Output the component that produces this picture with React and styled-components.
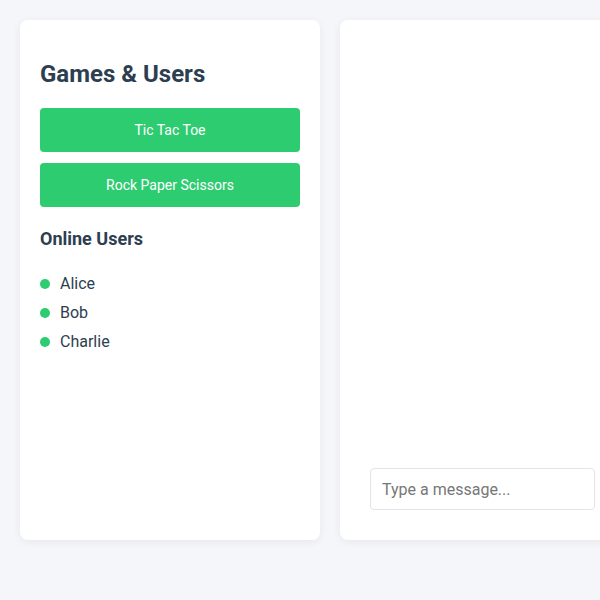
import React from 'react';
import styled, { createGlobalStyle } from 'styled-components';

const GlobalStyle = createGlobalStyle`
  * { box-sizing: border-box; }
  body {
    margin: 0;
    background: #f5f6fa;
    font-family: Roboto, "Liberation Sans", sans-serif;
    overflow: hidden;
  }
`;

const Page = styled.div`
  display: flex;
  gap: 20px;
  padding: 20px;
  height: 560px;
  width: 900px;
`;

const Card = styled.div`
  background: #fff;
  border-radius: 8px;
  box-shadow: 0 2px 10px rgba(0, 0, 0, 0.06);
  padding: 20px;
  display: flex;
  flex-direction: column;
`;

const Sidebar = styled(Card)`
  width: 300px;
`;

const ChatPanel = styled(Card)`
  flex: 1;
  padding: 30px;
`;

const Title = styled.h2`
  margin: 21px 0 21px;
  font-size: 24px;
  font-weight: 700;
  color: #2c3e50;
  line-height: 26px;
`;

const GameButton = styled.button`
  height: 44px;
  width: 100%;
  margin-bottom: 11px;
  border: none;
  border-radius: 4px;
  background: #2ecc71;
  color: #fff;
  font-family: Roboto, "Liberation Sans", sans-serif;
  font-size: 14px;
  padding-top: 1px;
  cursor: pointer;
`;

const SubTitle = styled.h3`
  margin: 9px 0 23px;
  font-size: 18px;
  font-weight: 700;
  color: #2c3e50;
  line-height: 24px;
`;

const UserList = styled.ul`
  list-style: none;
  margin: 0;
  padding: 0;
  display: flex;
  flex-direction: column;
  gap: 9px;
`;

const UserRow = styled.li`
  display: flex;
  align-items: center;
  gap: 10px;
  font-size: 16px;
  line-height: 20px;
  color: #2c3e50;
`;

const Dot = styled.span`
  width: 10px;
  height: 10px;
  border-radius: 50%;
  background: ${p => p.color || '#2ecc71'};
`;

const Messages = styled.div`
  flex: 1;
`;

const InputRow = styled.div`
  display: flex;
  gap: 10px;
`;

const MessageInput = styled.input`
  width: 225px;
  height: 42px;
  padding: 0 11px;
  border: 1px solid #e3e4e8;
  border-radius: 4px;
  font-family: Roboto, "Liberation Sans", sans-serif;
  font-size: 16px;
  color: #2c3e50;
  outline: none;
  &::placeholder { color: #777; }
`;

const users = ['Alice', 'Bob', 'Charlie'];

export default function App() {
  return (
    <>
      <GlobalStyle />
      <Page>
        <Sidebar>
          <Title>Games &amp; Users</Title>
          <GameButton>Tic Tac Toe</GameButton>
          <GameButton>Rock Paper Scissors</GameButton>
          <SubTitle>Online Users</SubTitle>
          <UserList>
            {users.map(u => (
              <UserRow key={u}>
                <Dot />
                {u}
              </UserRow>
            ))}
          </UserList>
        </Sidebar>
        <ChatPanel>
          <Messages />
          <InputRow>
            <MessageInput placeholder="Type a message..." />
          </InputRow>
        </ChatPanel>
      </Page>
    </>
  );
}
